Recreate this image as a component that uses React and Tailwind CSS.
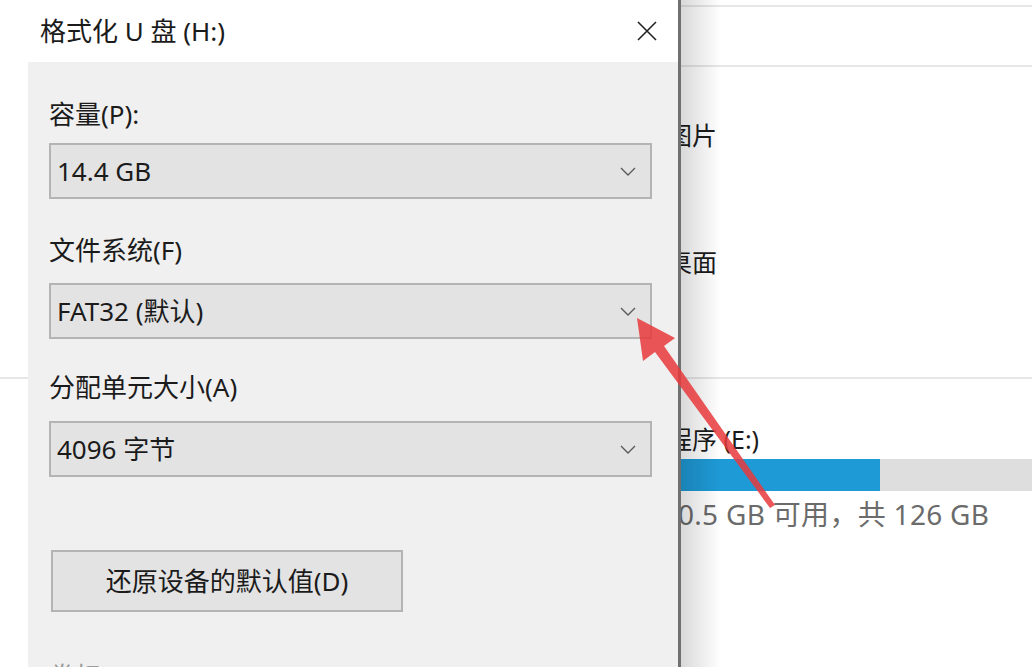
const font = { fontFamily: '"Noto Sans", "Noto Sans CJK SC", sans-serif' };

function Select({ value }) {
  return (
    <div className="flex h-[56px] w-[603px] shrink-0 items-center justify-between border-2 border-[#b4b4b4] bg-[#e3e3e3] pl-[6px] pr-[14px]">
      <span className="text-[26px] leading-none text-[#1b1b1b]">{value}</span>
      <svg width="16" height="9" viewBox="0 0 16 9" fill="none">
        <path d="M1 1l7 7 7-7" stroke="#5a5a5a" strokeWidth="1.4" />
      </svg>
    </div>
  );
}

function FormatDialog() {
  return (
    <div className="absolute left-[28px] top-0 flex h-full w-[653px] flex-col border-r-[3px] border-[#707070]">
      {/* title bar */}
      <div className="-ml-[28px] flex h-[62px] shrink-0 items-center justify-between bg-white pl-[40px] pr-[21px]">
        <span className="text-[26px] text-[#1b1b1b]">格式化 U 盘 (H:)</span>
        <svg width="20" height="20" viewBox="0 0 20 20">
          <path d="M1 1l18 18M19 1L1 19" stroke="#222" strokeWidth="1.6" />
        </svg>
      </div>

      {/* body */}
      <div className="flex min-h-0 flex-1 flex-col overflow-hidden bg-[#f0f0f0] pl-[21px] pt-[34px] text-[#1b1b1b]">
        <div className="h-[36px] shrink-0 text-[26px] leading-[36px]">容量(P):</div>
        <div className="mt-[11px] shrink-0">
          <Select value="14.4 GB" />
        </div>
        <div className="mt-[33px] h-[36px] shrink-0 text-[26px] leading-[36px]">文件系统(F)</div>
        <div className="mt-[15px] shrink-0">
          <Select value="FAT32 (默认)" />
        </div>
        <div className="mt-[30px] h-[36px] shrink-0 text-[26px] leading-[36px]">分配单元大小(A)</div>
        <div className="mt-[16px] shrink-0">
          <Select value="4096 字节" />
        </div>
        <button className="ml-[2px] mt-[73px] flex h-[62px] w-[352px] shrink-0 items-center justify-center border-2 border-[#b4b4b4] bg-[#e3e3e3] text-[26px] text-[#1b1b1b]">
          还原设备的默认值(D)
        </button>
        <div className="mt-[46px] h-[36px] shrink-0 text-[26px] leading-[36px] text-[#9a9a9a]">卷标(L)</div>
      </div>

      {/* window shadow */}
      <div className="absolute -right-[43px] top-0 h-full w-[40px] bg-gradient-to-r from-black/15 to-transparent" />
    </div>
  );
}

function Explorer() {
  return (
    <div className="flex h-full flex-col pl-[667px] text-[#1b1b1b]">
      <div className="mt-[5px] border-t-2 border-[#e6e6e6]" />
      <div className="mt-[58px] border-t-2 border-[#e6e6e6]" />
      <div className="mt-[50px] h-[36px] text-[25px] leading-[36px]">图片</div>
      <div className="mt-[91px] h-[36px] text-[25px] leading-[36px]">桌面</div>
      <div className="-ml-[667px] mt-[97px] border-t-2 border-[#e6e6e6]" />
      <div className="mt-[42px] h-[36px] text-[25px] leading-[36px]">程序 (E:)</div>
      <div className="mt-[2px] flex h-[32px] bg-[#dedede]">
        <div className="w-[213px] bg-[#1e9ad6]" />
      </div>
      <div className="ml-[11px] mt-[4px] h-[38px] whitespace-nowrap text-[28px] leading-[38px] tracking-[0.3px] text-[#6b6b6b]">
        0.5 GB 可用，共 126 GB
      </div>
    </div>
  );
}

function Arrow() {
  return (
    <svg className="absolute left-0 top-0" width="1032" height="667" viewBox="0 0 1032 667">
      <polygon
        points="637,318 675,338 664,346 775,505 770,508 655,352 643,361"
        fill="#e8393c"
        opacity="0.85"
      />
    </svg>
  );
}

export default function App() {
  return (
    <div className="relative h-[667px] w-[1032px] overflow-hidden bg-white" style={font}>
      <Explorer />
      <FormatDialog />
      <Arrow />
    </div>
  );
}
